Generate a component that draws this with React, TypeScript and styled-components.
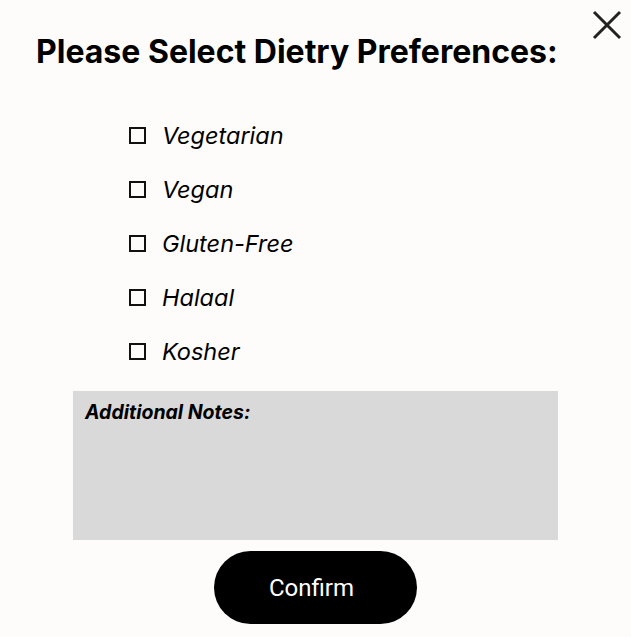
import React from "react";
import styled, { createGlobalStyle } from "styled-components";

const Global = createGlobalStyle`
  html, body { margin: 0; padding: 0; background: #fdfcfb; }
  * { box-sizing: border-box; }
`;

const Page = styled.div`
  position: relative;
  width: 631px;
  height: 637px;
  background: #fdfcfb;
  font-family: Inter, "Noto Sans", sans-serif;
  color: #000;
  display: flex;
  flex-direction: column;
`;

const Close = styled.button`
  position: absolute;
  top: 10px;
  right: 9px;
  width: 30px;
  height: 30px;
  padding: 0;
  border: none;
  background: transparent;
  display: flex;
  align-items: center;
  justify-content: center;
`;

const Title = styled.h1`
  margin: 34px 0 0 36px;
  font-size: 32px;
  font-weight: 700;
  line-height: 36px;
  letter-spacing: 0;
  white-space: nowrap;
`;

const List = styled.div`
  display: flex;
  flex-direction: column;
  gap: 22px;
  margin: 49px 0 0 129px;
`;

const Row = styled.label`
  display: flex;
  align-items: center;
  gap: 16px;
  height: 32px;
  font-size: 23.5px;
  font-style: italic;
  font-weight: 400;
`;

const Box = styled.span`
  width: 17px;
  height: 17px;
  border: 2px solid #111;
  flex: none;
`;

const Notes = styled.div`
  margin: 24px auto 0;
  width: 485px;
  height: 149px;
  background: #d9d9d9;
  padding: 9px 12px;
`;

const NotesLabel = styled.div`
  font-size: 19.5px;
  font-weight: 700;
  font-style: italic;
  line-height: 24px;
`;

const ConfirmButton = styled.button`
  margin: 11px auto 0;
  width: 203px;
  height: 73px;
  border: none;
  border-radius: 37px;
  background: #000;
  color: #fff;
  font-family: Roboto, "Liberation Sans", sans-serif;
  font-weight: 400;
  font-size: 24px;
  padding: 0 8px 0 0;
  display: flex;
  align-items: center;
  justify-content: center;
`;

const options = ["Vegetarian", "Vegan", "Gluten-Free", "Halaal", "Kosher"];

export default function App() {
  return (
    <Page>
      <Global />
      <Close aria-label="Close">
        <svg width="30" height="30" viewBox="0 0 30 30">
          <path d="M2 2 L28 28 M28 2 L2 28" stroke="#222" strokeWidth="3" />
        </svg>
      </Close>
      <Title>Please Select Dietry Preferences:</Title>
      <List>
        {options.map((o) => (
          <Row key={o}>
            <Box />
            {o}
          </Row>
        ))}
      </List>
      <Notes>
        <NotesLabel>Additional Notes:</NotesLabel>
      </Notes>
      <ConfirmButton>Confirm</ConfirmButton>
    </Page>
  );
}
